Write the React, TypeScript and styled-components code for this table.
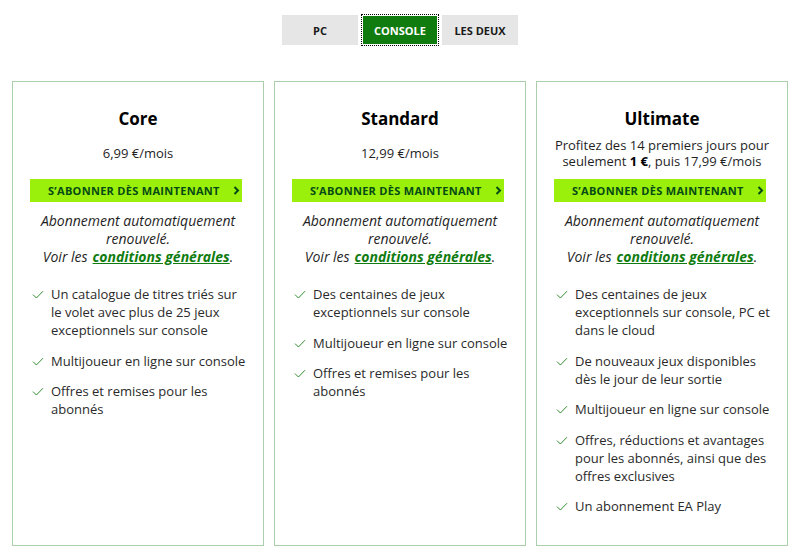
import React from "react";
import styled, { createGlobalStyle } from "styled-components";

const Global = createGlobalStyle`
  html, body { margin: 0; padding: 0; background: #fff; }
  body { font-family: "Open Sans", "Noto Sans", sans-serif; color: #2a2a2a; }
  * { box-sizing: border-box; }
`;

const Page = styled.div`
  width: 800px;
  height: 558px;
  padding: 15px 12px 0;
`;

const Tabs = styled.div`
  display: flex;
  justify-content: center;
  gap: 4px;
  height: 30px;
  margin-bottom: 36px;
`;

const Tab = styled.button<{ $active?: boolean }>`
  width: 76px;
  height: 30px;
  border: none;
  font-family: "Open Sans", sans-serif;
  font-weight: 700;
  font-size: 11px;
  padding: 0;
  cursor: pointer;
  background: ${(p) => (p.$active ? "#107c10" : "#e6e6e6")};
  color: ${(p) => (p.$active ? "#fff" : "#1a1a1a")};
  outline: ${(p) => (p.$active ? "1px dotted #000" : "none")};
  outline-offset: 0;
  ${(p) => (p.$active ? "box-shadow: 0 0 0 1px #fff inset;" : "")}
`;

const Grid = styled.div`
  display: grid;
  grid-template-columns: repeat(3, 1fr);
  gap: 10px;
`;

const Card = styled.div`
  height: 465px;
  border: 1px solid #abcfab;
  padding: 25px 17px 0;
  display: flex;
  flex-direction: column;
  align-items: stretch;
`;

const Title = styled.h2`
  margin: 0;
  font-size: 17px;
  line-height: 24px;
  font-weight: 700;
  color: #000;
  text-align: center;
`;

const Desc = styled.div`
  height: 32px;
  margin-top: 6px;
  display: flex;
  align-items: center;
  justify-content: center;
  text-align: center;
  font-size: 13px;
  line-height: 16px;
  color: #1f1f1f;
`;

const Strong = styled.b`
  font-weight: 700;
  color: #000;
`;

const Cta = styled.a`
  margin: 10px 4px 0 0;
  height: 23px;
  background: #9bf00b;
  display: flex;
  align-items: center;
  justify-content: flex-start;
  gap: 13px;
  font-weight: 700;
  font-size: 11px;
  letter-spacing: 0.3px;
  color: #054b16;
  text-decoration: none;
  padding-left: 18px;
`;

const Chevron = styled.svg`
  width: 7px;
  height: 9px;
`;

const Note = styled.p`
  margin: 10px 0 0;
  text-align: center;
  font-style: italic;
  font-size: 14px;
  line-height: 18px;
  color: #1f1f1f;
`;

const TermsLink = styled.a`
  color: #107c10;
  font-weight: 700;
  text-decoration: underline;
  margin-left: 5px;
`;

const List = styled.ul`
  list-style: none;
  margin: 19px 0 0;
  padding: 0 0 0 2px;
  display: flex;
  flex-direction: column;
  gap: 12.5px;
`;

const Item = styled.li`
  display: flex;
  gap: 7px;
  font-size: 13px;
  line-height: 18px;
  color: #2a2a2a;
`;

const Check = styled.svg`
  flex: none;
  width: 12px;
  height: 18px;
`;

const CheckIcon = () => (
  <Check viewBox="0 0 12 18">
    <path d="M1 9.6 L4.4 13 L11 6.2" fill="none" stroke="#2f8f2f" strokeWidth="1" />
  </Check>
);

type Plan = { name: string; desc: React.ReactNode; items: string[] };

const plans: Plan[] = [
  {
    name: "Core",
    desc: "6,99 €/mois",
    items: [
      "Un catalogue de titres triés sur le volet avec plus de 25 jeux exceptionnels sur console",
      "Multijoueur en ligne sur console",
      "Offres et remises pour les abonnés",
    ],
  },
  {
    name: "Standard",
    desc: "12,99 €/mois",
    items: [
      "Des centaines de jeux exceptionnels sur console",
      "Multijoueur en ligne sur console",
      "Offres et remises pour les abonnés",
    ],
  },
  {
    name: "Ultimate",
    desc: (
      <span>
        Profitez des 14 premiers jours pour
        <br />
        seulement <Strong>1 €</Strong>, puis 17,99 €/mois
      </span>
    ),
    items: [
      "Des centaines de jeux exceptionnels sur console, PC et dans le cloud",
      "De nouveaux jeux disponibles dès le jour de leur sortie",
      "Multijoueur en ligne sur console",
      "Offres, réductions et avantages pour les abonnés, ainsi que des offres exclusives",
      "Un abonnement EA Play",
    ],
  },
];

export default function App() {
  return (
    <Page>
      <Global />
      <Tabs>
        <Tab>PC</Tab>
        <Tab $active>CONSOLE</Tab>
        <Tab>LES DEUX</Tab>
      </Tabs>
      <Grid>
        {plans.map((p) => (
          <Card key={p.name}>
            <Title>{p.name}</Title>
            <Desc>{p.desc}</Desc>
            <Cta href="#">
              <span>S’ABONNER DÈS MAINTENANT</span>
              <Chevron viewBox="0 0 7 9">
                <path d="M1.5 1 L5 4.5 L1.5 8" fill="none" stroke="#054b16" strokeWidth="2" />
              </Chevron>
            </Cta>
            <Note>
              Abonnement automatiquement renouvelé.
              <br />
              Voir les<TermsLink href="#">conditions générales</TermsLink>.
            </Note>
            <List>
              {p.items.map((it) => (
                <Item key={it}>
                  <CheckIcon />
                  <span>{it}</span>
                </Item>
              ))}
            </List>
          </Card>
        ))}
      </Grid>
    </Page>
  );
}
